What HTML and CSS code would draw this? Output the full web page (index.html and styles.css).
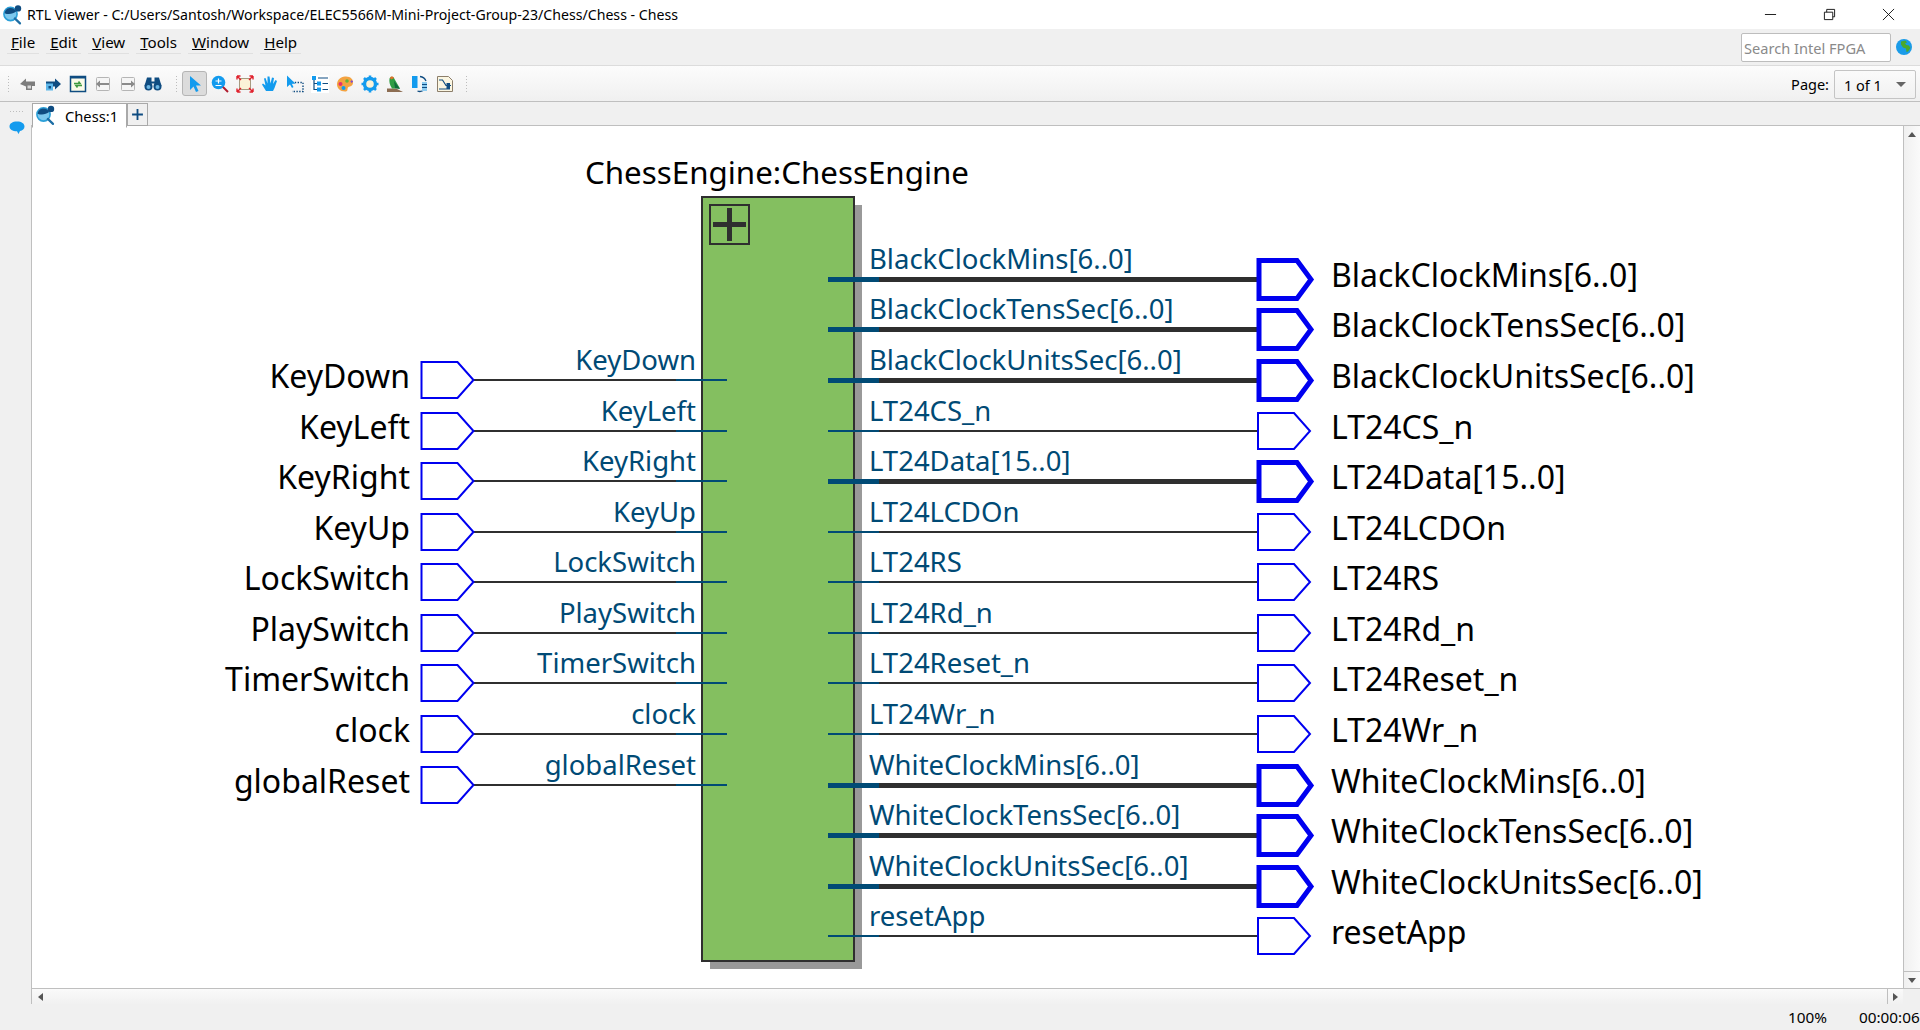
FILE: index.html
```html
<!DOCTYPE html>
<html lang="en">
<head>
<meta charset="utf-8">
<title>RTL Viewer</title>
<link rel="stylesheet" href="styles.css">
</head>
<body>
<svg class="defs" width="0" height="0">
  <defs>
    <symbol id="logo" viewBox="0 0 20 20">
      <circle cx="8.5" cy="9" r="6.6" fill="#7cc8ee" stroke="#2a9fd8" stroke-width="1.6"/>
      <path d="M2.6 8.2a6 6 0 0 1 11.5-1.6c-3 2.6-8 3.2-11.5 1.6z" fill="#0f4c81"/>
      <circle cx="16" cy="3.4" r="3.2" fill="#0f4c81"/>
      <path d="M12.8 13.4l5.2 5" stroke="#1d6ea5" stroke-width="2.2" stroke-linecap="round"/>
    </symbol>
    <symbol id="port-thin" viewBox="0 0 56 40">
      <path d="M2 2H38L54 20L38 38H2Z" fill="#fff" stroke="#0000f0" stroke-width="2"/>
    </symbol>
    <symbol id="port-thick" viewBox="0 0 60 44">
      <path d="M3 3H41L55 22L41 41H3Z" fill="#fff" stroke="#0000f0" stroke-width="5"/>
    </symbol>
  </defs>
</svg>

<header class="titlebar">
  <svg class="title-logo"><use href="#logo"/></svg>
  <span class="title-text">RTL Viewer - C:/Users/Santosh/Workspace/ELEC5566M-Mini-Project-Group-23/Chess/Chess - Chess</span>
  <div class="window-controls">
    <svg class="win-btn" viewBox="0 0 14 14"><path d="M1 7H13" stroke="#111" stroke-width="1"/></svg>
    <svg class="win-btn" viewBox="0 0 14 14"><path d="M1.5 4.5H10.5V12.5H1.5ZM4 4.5V1.5H12.5V9.5H10.5" fill="none" stroke="#111" stroke-width="1"/></svg>
    <svg class="win-btn" viewBox="0 0 14 14"><path d="M1 1L13 13M13 1L1 13" stroke="#111" stroke-width="1"/></svg>
  </div>
</header>

<nav class="menubar">
  <div class="menu-items">
    <span class="menu-item"><u>F</u>ile</span>
    <span class="menu-item"><u>E</u>dit</span>
    <span class="menu-item"><u>V</u>iew</span>
    <span class="menu-item"><u>T</u>ools</span>
    <span class="menu-item"><u>W</u>indow</span>
    <span class="menu-item"><u>H</u>elp</span>
  </div>
  <div class="search-box">Search Intel FPGA</div>
  <svg class="globe" viewBox="0 0 16 16">
    <circle cx="8" cy="8" r="8" fill="#1a9be8"/>
    <path d="M5 2.5L9.5 1.5L11 3.5L9 4.5L10.5 6L13 6.5L14.5 9L12 12.5L10.5 13L10 9.5L7 8.5L5 5.5Z" fill="#4aa82e"/>
  </svg>
</nav>

<div class="toolbar">
  <span class="grip"></span>
  <span class="tool"><svg viewBox="0 0 18 18"><path d="M1 9L7 3.5V6.5H16V11H13V15H7V11.5Z" fill="#7d7d7d"/><rect x="8.5" y="10.5" width="3.5" height="3" fill="#d8d8d8"/></svg></span>
  <span class="tool"><svg viewBox="0 0 18 18"><path d="M17 9L11 3.5V6.5H2V15H9V11.5H11V14.5Z" fill="#0f4c81"/><rect x="2" y="8.5" width="7" height="7" fill="#5db7ea"/><rect x="4.5" y="11" width="2.5" height="2.5" fill="#0f4c81"/></svg></span>
  <span class="tool"><svg viewBox="0 0 18 18"><rect x="1.5" y="1.5" width="15" height="15" fill="#fdfbe9" stroke="#0f4c81" stroke-width="1.5"/><rect x="1" y="1" width="16" height="2.5" fill="#0f4c81"/><path d="M5 8.5H11L9.5 6.5M13 10.5H7L8.5 12.5" fill="none" stroke="#3f9a3f" stroke-width="1.6"/></svg></span>
  <span class="tool"><svg viewBox="0 0 18 18"><rect x="2.5" y="2.5" width="13" height="13" rx="1" fill="#f5f5f5" stroke="#b5b5b5"/><path d="M2 9L6 5.5V8H15V10H6V12.5Z" fill="#8a8a8a"/></svg></span>
  <span class="tool"><svg viewBox="0 0 18 18"><rect x="2.5" y="2.5" width="13" height="13" rx="1" fill="#f5f5f5" stroke="#b5b5b5"/><path d="M16 9L12 5.5V8H3V10H12V12.5Z" fill="#8a8a8a"/></svg></span>
  <span class="tool"><svg viewBox="0 0 18 18"><path d="M3 2.500H7.500V6.500H10.500V2.500H15L17.500 11L10.500 11V8.500H7.500V11L.5 11Z" fill="#0f4c81"/><circle cx="4.500" cy="11.500" r="4" fill="#0f4c81"/><circle cx="13.500" cy="11.500" r="4" fill="#0f4c81"/><circle cx="4.500" cy="12" r="2" fill="#6cb6e4"/><circle cx="13.500" cy="12" r="2" fill="#6cb6e4"/></svg></span>
  <span class="grip grip-mid"></span>
  <span class="tool tool-active"><svg viewBox="0 0 18 18"><path d="M4 1V15L7.5 11.5L10 17L12.5 16L10 10.5H15Z" fill="#139bee"/></svg></span>
  <span class="tool"><svg viewBox="0 0 18 18"><circle cx="7.5" cy="7.5" r="6.8" fill="#139bee"/><path d="M4.5 6H10.5M7.5 3.5V8.5M4.5 10.5H10.5" stroke="#fff" stroke-width="1.2"/><path d="M12 12L17 17" stroke="#b01c2e" stroke-width="2"/></svg></span>
  <span class="tool"><svg viewBox="0 0 18 18"><rect x="3.5" y="3.5" width="11" height="11" fill="#fbf3d8" stroke="#a89a80"/><path d="M1 1L5 5M1 1V4.5M1 1H4.5M17 1L13 5M17 1V4.5M17 1H13.5M1 17L5 13M1 17V13.5M1 17H4.5M17 17L13 13M17 17V13.5M17 17H13.5" fill="none" stroke="#e0202c" stroke-width="1.4"/></svg></span>
  <span class="tool"><svg viewBox="0 0 18 18"><path d="M5 16L1 9.5L2 8.5L4.5 10.5L3 3.5L4.5 3L6.5 8.5L6.5 1.5H8.5L9.5 8.5L11 2.5L13 3L12 9L14.5 5L16 6L13.5 13L12 16Z" fill="#139bee"/></svg></span>
  <span class="tool"><svg viewBox="0 0 18 18"><path d="M6 7.5H17V16.5H6" fill="none" stroke="#0f4c81" stroke-width="1.4" stroke-dasharray="1.4 1.4"/><path d="M1 0.5V12L4 9.5L6 13L7.5 12L5.8 8.8H9.5Z" fill="#139bee"/></svg></span>
  <span class="tool"><svg viewBox="0 0 18 18"><rect width="18" height="18" fill="#fff"/><rect x="1" y="1" width="4" height="4" fill="#139bee"/><rect x="6" y="6.5" width="4" height="4" fill="#139bee"/><rect x="6" y="12.5" width="4" height="4" fill="#139bee"/><path d="M3 5V14.5H6M3 8.5H6M7 3H17M11.5 8.5H17M11.5 14.5H17" fill="none" stroke="#0f4c81" stroke-width="1.2"/></svg></span>
  <span class="tool"><svg viewBox="0 0 18 18"><path d="M9 1.5C14 1 17.500 4 17 8C16.500 12 13 11 12 12.500C11 14 12.500 16.500 9 16.500C4 16.500 1 13 1 9.500C1 5 4.500 2 9 1.500Z" fill="#f4a341"/><circle cx="4.500" cy="9" r="2" fill="#e62f6e"/><circle cx="7.500" cy="13" r="2" fill="#139bee"/><circle cx="11" cy="6" r="1.800" fill="#65b33c"/><path d="M14.500 6.500H17M15.700 5.200V8" stroke="#8a52c4" stroke-width="1"/></svg></span>
  <span class="tool"><svg viewBox="0 0 18 18"><circle cx="9" cy="9" r="5.500" fill="#fbf3d8" stroke="#139bee" stroke-width="3.400"/><path d="M9 .5V3M9 15V17.500M.5 9H3M15 9H17.500M3 3L4.800 4.800M13.200 13.200L15 15M15 3L13.200 4.800M4.800 13.200L3 15" stroke="#139bee" stroke-width="2.600"/></svg></span>
  <span class="tool"><svg viewBox="0 0 18 18"><path d="M1 17V13.500H10L17 17Z" fill="#8c6d52"/><path d="M3.500 3.500C5 .5 8 1.500 8.500 4L14 13.500H6C3.500 10 3 6 3.500 3.500Z" fill="#2f9e44"/><path d="M3.800 3C5 .8 7.500 1.200 8 3L5.500 4.500Z" fill="#e0722c"/><path d="M8 6L14 14L9 13Z" fill="#0f6a3c"/></svg></span>
  <span class="tool"><svg viewBox="0 0 18 18"><rect x="1" y="1" width="5.500" height="12" fill="#139bee"/><path d="M9 1.500C13 2 14 3.500 15 6M6.500 16C9 17 10.500 16.500 12 15.500" fill="none" stroke="#0f4c81" stroke-width="1.300"/><rect x="11" y="7" width="5" height="9" fill="#8ccbf0"/><path d="M11 9.500H16M11 12.500H16" stroke="#0f4c81"/></svg></span>
  <span class="tool"><svg viewBox="0 0 18 18"><path d="M1.500 1.500H12.500L16.500 5.500V16.500H1.500Z" fill="#fbf6e2" stroke="#8c7e6a"/><path d="M3 5H6.500L10 10.500H15" fill="none" stroke="#0f4c81" stroke-width="1.200"/><rect x="10.500" y="8" width="3.500" height="6" fill="#0f4c81"/><path d="M3 14H14" stroke="#0f4c81"/></svg></span>
  <span class="grip grip-end"></span>
  <span class="page-label">Page:</span>
  <div class="page-combo"><span>1 of 1</span><span class="combo-arrow"></span></div>
</div>

<div class="lower">
  <aside class="sidestrip">
    <span class="side-grip"></span>
    <svg class="chat-icon" viewBox="0 0 16 14"><path d="M8 .5C12.500 .5 15.500 2.500 15.500 5.500C15.500 8 13.500 9.500 11 10L9.500 13L8 10.300C3.500 10.300 .5 8.500 .5 5.500C.5 2.500 3.500 .5 8 .5Z" fill="#139bee"/></svg>
  </aside>
  <div class="main-col">
    <div class="tabrow">
      <div class="tab"><svg class="tab-logo"><use href="#logo"/></svg><span>Chess:1</span></div>
      <div class="tab-add"><svg viewBox="0 0 12 12"><path d="M6 1V11M1 6H11" stroke="#0f4c81" stroke-width="1.700"/></svg></div>
    </div>
    <div class="viewport">
      <div class="canvas-row">
        <div class="canvas">
          <svg class="schematic" viewBox="32 126 1871 861" width="1871" height="861">
            <rect class="shadow" x="710" y="205" width="152" height="764"/>
            <g class="wires" shape-rendering="crispEdges">
              <path class="wire-thin" d="M474 380H676M474 431H676M474 481H676M474 532H676M474 582H676M474 633H676M474 683H676M474 734H676M474 785H676"/>
              <path class="wire-thick" d="M879 279.500H1258M879 329.500H1258M879 380.500H1258M879 481.500H1258M879 785.500H1258M879 835.500H1258M879 886.500H1258"/>
              <path class="wire-thin" d="M879 431H1258M879 532H1258M879 582H1258M879 633H1258M879 683H1258M879 734H1258M879 936H1258"/>
            </g>
            <rect class="block" x="702" y="197" width="152" height="764" shape-rendering="crispEdges"/>
            <g shape-rendering="crispEdges">
              <rect class="expand-box" x="710" y="205" width="39" height="39"/>
              <path class="expand-plus" d="M713 224.500H746M729.500 208V241"/>
              <path class="pin-thin" d="M676 380H727M676 431H727M676 481H727M676 532H727M676 582H727M676 633H727M676 683H727M676 734H727M676 785H727"/>
              <path class="pin-thick" d="M828 279.500H879M828 329.500H879M828 380.500H879M828 481.500H879M828 785.500H879M828 835.500H879M828 886.500H879"/>
              <path class="pin-thin" d="M828 431H879M828 532H879M828 582H879M828 633H879M828 683H879M828 734H879M828 936H879"/>
            </g>

            <text class="block-title" x="585" y="184">ChessEngine:ChessEngine</text>

            <use href="#port-thin" x="419.500" y="360" width="56" height="40"/>
            <use href="#port-thin" x="419.500" y="411" width="56" height="40"/>
            <use href="#port-thin" x="419.500" y="461" width="56" height="40"/>
            <use href="#port-thin" x="419.500" y="512" width="56" height="40"/>
            <use href="#port-thin" x="419.500" y="562" width="56" height="40"/>
            <use href="#port-thin" x="419.500" y="613" width="56" height="40"/>
            <use href="#port-thin" x="419.500" y="663" width="56" height="40"/>
            <use href="#port-thin" x="419.500" y="714" width="56" height="40"/>
            <use href="#port-thin" x="419.500" y="765" width="56" height="40"/>

            <use href="#port-thick" x="1256" y="257.500" width="60" height="44"/>
            <use href="#port-thick" x="1256" y="307.500" width="60" height="44"/>
            <use href="#port-thick" x="1256" y="358.500" width="60" height="44"/>
            <use href="#port-thin" x="1256" y="411" width="56" height="40"/>
            <use href="#port-thick" x="1256" y="459.500" width="60" height="44"/>
            <use href="#port-thin" x="1256" y="512" width="56" height="40"/>
            <use href="#port-thin" x="1256" y="562" width="56" height="40"/>
            <use href="#port-thin" x="1256" y="613" width="56" height="40"/>
            <use href="#port-thin" x="1256" y="663" width="56" height="40"/>
            <use href="#port-thin" x="1256" y="714" width="56" height="40"/>
            <use href="#port-thick" x="1256" y="763.500" width="60" height="44"/>
            <use href="#port-thick" x="1256" y="813.500" width="60" height="44"/>
            <use href="#port-thick" x="1256" y="864.500" width="60" height="44"/>
            <use href="#port-thin" x="1256" y="916" width="56" height="40"/>

            <g class="outer-label end">
              <text x="410" y="388">KeyDown</text>
              <text x="410" y="439">KeyLeft</text>
              <text x="410" y="489">KeyRight</text>
              <text x="410" y="540">KeyUp</text>
              <text x="410" y="590">LockSwitch</text>
              <text x="410" y="641">PlaySwitch</text>
              <text x="410" y="691">TimerSwitch</text>
              <text x="410" y="742">clock</text>
              <text x="410" y="793">globalReset</text>
            </g>
            <g class="inner-label end">
              <text x="696" y="370">KeyDown</text>
              <text x="696" y="421">KeyLeft</text>
              <text x="696" y="471">KeyRight</text>
              <text x="696" y="522">KeyUp</text>
              <text x="696" y="572">LockSwitch</text>
              <text x="696" y="623">PlaySwitch</text>
              <text x="696" y="673">TimerSwitch</text>
              <text x="696" y="724">clock</text>
              <text x="696" y="775">globalReset</text>
            </g>
            <g class="inner-label">
              <text x="869" y="269">BlackClockMins[6..0]</text>
              <text x="869" y="319">BlackClockTensSec[6..0]</text>
              <text x="869" y="370">BlackClockUnitsSec[6..0]</text>
              <text x="869" y="421">LT24CS_n</text>
              <text x="869" y="471">LT24Data[15..0]</text>
              <text x="869" y="522">LT24LCDOn</text>
              <text x="869" y="572">LT24RS</text>
              <text x="869" y="623">LT24Rd_n</text>
              <text x="869" y="673">LT24Reset_n</text>
              <text x="869" y="724">LT24Wr_n</text>
              <text x="869" y="775">WhiteClockMins[6..0]</text>
              <text x="869" y="825">WhiteClockTensSec[6..0]</text>
              <text x="869" y="876">WhiteClockUnitsSec[6..0]</text>
              <text x="869" y="926">resetApp</text>
            </g>
            <g class="outer-label">
              <text x="1331" y="287">BlackClockMins[6..0]</text>
              <text x="1331" y="337">BlackClockTensSec[6..0]</text>
              <text x="1331" y="388">BlackClockUnitsSec[6..0]</text>
              <text x="1331" y="439">LT24CS_n</text>
              <text x="1331" y="489">LT24Data[15..0]</text>
              <text x="1331" y="540">LT24LCDOn</text>
              <text x="1331" y="590">LT24RS</text>
              <text x="1331" y="641">LT24Rd_n</text>
              <text x="1331" y="691">LT24Reset_n</text>
              <text x="1331" y="742">LT24Wr_n</text>
              <text x="1331" y="793">WhiteClockMins[6..0]</text>
              <text x="1331" y="843">WhiteClockTensSec[6..0]</text>
              <text x="1331" y="894">WhiteClockUnitsSec[6..0]</text>
              <text x="1331" y="944">resetApp</text>
            </g>
          </svg>
        </div>
        <div class="vscroll">
          <span class="vs-btn"><span class="arrow-up"></span></span>
          <span class="vs-track"></span>
          <span class="vs-btn vs-btn-end"><span class="arrow-down"></span></span>
        </div>
      </div>
      <div class="hscroll">
        <span class="hs-btn"><span class="arrow-left"></span></span>
        <span class="hs-track"></span>
        <span class="hs-btn hs-btn-end"><span class="arrow-right"></span></span>
        <span class="hs-corner"></span>
      </div>
    </div>
  </div>
</div>

<footer class="statusbar">
  <span class="status-zoom">100%</span>
  <span class="status-time">00:00:06</span>
</footer>
</body>
</html>
```
FILE: styles.css
```css
* { box-sizing: border-box; }
html, body { margin: 0; padding: 0; }
body {
  width: 1920px;
  height: 1030px;
  overflow: hidden;
  display: flex;
  flex-direction: column;
  background: #f0f0f0;
  color: #000;
  font-family: "Noto Sans", "Open Sans", sans-serif;
  font-size: 14px;
}
.defs { position: absolute; }

.titlebar {
  height: 29px;
  flex: none;
  display: flex;
  align-items: center;
  background: #fff;
  padding-left: 2px;
}
.title-logo { width: 20px; height: 22px; flex: none; }
.title-text { margin-left: 5px; font-size: 14.15px; white-space: nowrap; }
.window-controls { margin-left: auto; display: flex; gap: 46px; padding-right: 25px; }
.win-btn { width: 13px; height: 13px; display: block; }

.menubar {
  height: 37px;
  flex: none;
  display: flex;
  align-items: flex-start;
  background: #f0f0f0;
  border-bottom: 1px solid #dcdcdc;
  padding: 3px 0 0 7px;
}
.menu-items { display: flex; gap: 7px; }
.menu-item {
  padding: 0 4px;
  font-size: 15.1px;
  line-height: 21px;
  border-bottom: 1px solid #e0e0e0;
}
.search-box {
  margin-left: auto;
  width: 150px;
  height: 29px;
  margin-top: 1px;
  border: 1px solid #bdbdbd;
  border-radius: 2px;
  background: #fff;
  color: #8a8a8a;
  font-size: 14.6px;
  line-height: 28px;
  padding-left: 2px;
}
.globe { width: 16px; height: 16px; margin: 7px 8px 0 5px; flex: none; }

.toolbar {
  height: 36px;
  flex: none;
  display: flex;
  align-items: center;
  background: linear-gradient(#fcfcfc, #f0f0f0);
  border-bottom: 1px solid #bfbfbf;
  padding-left: 7px;
}
.grip {
  width: 3px;
  height: 17px;
  flex: none;
  background-image: radial-gradient(#bdbdbd 40%, transparent 45%);
  background-size: 3px 3px;
}
.grip:first-child { margin-right: 5px; }
.grip-mid { margin: 0 4px 0 10px; }
.grip-end { margin-left: 8px; }
.tool {
  width: 25px;
  height: 25px;
  flex: none;
  display: flex;
  align-items: center;
  justify-content: center;
}
.tool svg { width: 18px; height: 18px; display: block; }
.tool-active {
  background: #dcdcdc;
  border: 1px solid #b5b5b5;
  border-radius: 3px;
}
.page-label { margin-left: auto; font-size: 14.5px; }
.page-combo {
  width: 82px;
  height: 29px;
  margin: 2px 4px 0 5px;
  display: flex;
  align-items: center;
  justify-content: space-between;
  border: 1px solid #c4c4c4;
  border-radius: 2px;
  padding: 0 9px;
  font-size: 14.5px;
}
.combo-arrow {
  width: 0;
  height: 0;
  border-left: 5px solid transparent;
  border-right: 5px solid transparent;
  border-top: 5px solid #666;
}

.lower { flex: 1; min-height: 0; display: flex; }
.sidestrip {
  width: 31px;
  flex: none;
  background: #f0f0f0;
  padding: 8px 0 0 9px;
}
.side-grip {
  display: block;
  width: 16px;
  height: 3px;
  background-image: radial-gradient(#bdbdbd 40%, transparent 45%);
  background-size: 3px 3px;
}
.chat-icon { width: 16px; height: 14px; display: block; margin-top: 8px; }

.main-col { flex: 1; min-width: 0; display: flex; flex-direction: column; }
.tabrow {
  height: 24px;
  flex: none;
  display: flex;
  align-items: flex-start;
  background: #f0f0f0;
  border-bottom: 1px solid #bfbfbf;
  padding-left: 1px;
}
.tab {
  width: 95px;
  height: 25px;
  margin-top: 1px;
  display: flex;
  align-items: center;
  background: #fff;
  border: 1px solid #a9a9a9;
  border-bottom: 1px solid #fff;
  padding-left: 2px;
  font-size: 14.7px;
  position: relative;
  z-index: 1;
}
.tab span { margin-left: 10px; }
.tab-logo { width: 20px; height: 21px; flex: none; }
.tab-add {
  width: 21px;
  height: 23px;
  margin-top: 1px;
  border: 1px solid #a9a9a9;
  display: flex;
  align-items: center;
  justify-content: center;
}
.tab-add svg { width: 13px; height: 13px; display: block; }

.viewport { flex: 1; min-height: 0; display: flex; flex-direction: column; border-left: 1px solid #bfbfbf; }
.canvas-row { height: 862px; flex: none; display: flex; }
.canvas { flex: 1; min-width: 0; background: #fff; overflow: hidden; }
.schematic { display: block; }

.shadow { fill: #999; }
.wire-thin { fill: none; stroke: #2f2f2f; stroke-width: 2; }
.wire-thick { fill: none; stroke: #2f2f2f; stroke-width: 5; }
.pin-thin { fill: none; stroke: #004a75; stroke-width: 2; }
.pin-thick { fill: none; stroke: #004a75; stroke-width: 5; }
.block { fill: #84bf60; stroke: #2f2f2f; stroke-width: 2; }
.expand-box { fill: none; stroke: #2f2f2f; stroke-width: 2; }
.expand-plus { fill: none; stroke: #2f2f2f; stroke-width: 5; }
.block-title { font-family: "Noto Sans", sans-serif; font-size: 31.3px; fill: #000; }
.outer-label text { font-family: "Noto Sans", sans-serif; font-size: 32px; fill: #000; }
.inner-label text { font-family: "Noto Sans", sans-serif; font-size: 27.5px; fill: #004a75; }
.end text { text-anchor: end; }

.vscroll {
  width: 17px;
  flex: none;
  display: flex;
  flex-direction: column;
  border-left: 1px solid #bfbfbf;
  background: linear-gradient(90deg, #f0f0f0, #fafafa);
}
.vs-btn { height: 17px; flex: none; display: flex; align-items: center; justify-content: center; }
.vs-btn-end { border-top: 1px solid #bfbfbf; }
.vs-track { flex: 1; }
.arrow-up, .arrow-down, .arrow-left, .arrow-right { width: 0; height: 0; display: block; }
.arrow-up { border-left: 4px solid transparent; border-right: 4px solid transparent; border-bottom: 5px solid #555; }
.arrow-down { border-left: 4px solid transparent; border-right: 4px solid transparent; border-top: 5px solid #555; }
.arrow-left { border-top: 4px solid transparent; border-bottom: 4px solid transparent; border-right: 5px solid #555; }
.arrow-right { border-top: 4px solid transparent; border-bottom: 4px solid transparent; border-left: 5px solid #555; }

.hscroll {
  height: 17px;
  flex: none;
  display: flex;
  border-top: 1px solid #bfbfbf;
  background: linear-gradient(#fafafa, #f0f0f0);
}
.hs-btn { width: 16px; flex: none; display: flex; align-items: center; justify-content: center; }
.hs-btn-end { border-left: 1px solid #bfbfbf; }
.hs-track { flex: 1; }
.hs-corner { width: 17px; flex: none; background: #f0f0f0; }

.statusbar {
  height: 26px;
  flex: none;
  display: flex;
  align-items: center;
  background: #f0f0f0;
  font-size: 15.3px;
}
.status-zoom { margin-left: 1788px; }
.status-time { margin-left: 32px; white-space: nowrap; }
```
